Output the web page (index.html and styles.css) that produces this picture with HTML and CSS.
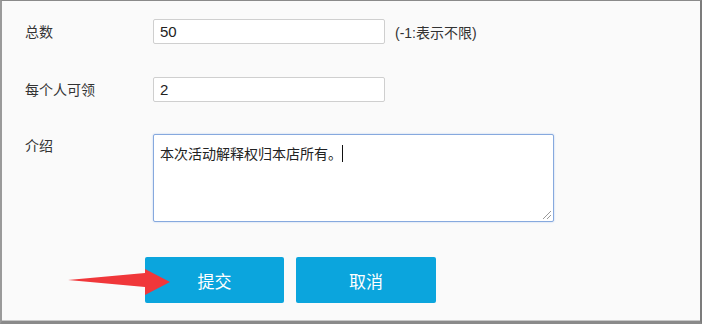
FILE: index.html
```html
<!DOCTYPE html>
<html>
  <head>
    <meta charset="utf-8">
    <title>优惠券设置</title>
    <link rel="stylesheet" href="styles.css">
  </head>
  <body>
    <div class="frame">
      <form class="form">
        <div class="row">
          <label class="label">总数</label>
          <div class="field">
            <input class="input" type="text" value="50">
            <span class="hint">(-1:表示不限)</span>
          </div>
        </div>

        <div class="row">
          <label class="label">每个人可领</label>
          <div class="field">
            <input class="input" type="text" value="2">
          </div>
        </div>

        <div class="row row_top">
          <label class="label">介绍</label>
          <div class="field">
            <div class="textarea">本次活动解释权归本店所有<span class="stop">。</span><span class="caret"></span></div>
          </div>
        </div>

        <div class="actions">
          <button class="btn" type="button">提交</button>
          <button class="btn btn_wide" type="button">取消</button>
        </div>
      </form>

      <!-- red pointer drawn over the page -->
      <svg class="arrow" width="110" height="34" viewBox="66 266 110 34">
        <polygon points="68,280 145,273 145,269 170,282 145,295 145,287" fill="#f0373a"/>
      </svg>
    </div>
  </body>
</html>
```
FILE: styles.css
```css
* {
  margin: 0;
  padding: 0;
  box-sizing: border-box;
}

body {
  background: #ffffff;
  font-family: "Liberation Sans", "Noto Sans CJK SC", sans-serif;
  color: #333;
}

.frame {
  position: relative;
  width: 702px;
  height: 324px;
  background: #fafafa;
  border-top: 1px solid #8a8a8a;
  border-left: 2px solid #9a9a9a;
  border-right: 2px solid #7c7c7c;
  border-bottom: 3px solid #8a8a8a;
  box-shadow: inset 0 -1px 0 #c8c8c8;
}

.form {
  padding: 18px 0 0 23px;
}

.row {
  display: grid;
  grid-template-columns: 128px auto;
  align-items: center;
  margin-bottom: 33px;
}

.row_top {
  align-items: start;
  margin-top: -1px;
  margin-bottom: 35px;
}

.row_top .label {
  padding-top: 2px;
}

.label {
  font-size: 14px;
  line-height: 20px;
  color: #333;
}

.field {
  display: flex;
  align-items: center;
}

.input {
  width: 232px;
  height: 25px;
  border: 1px solid #cfcfcf;
  border-radius: 2px;
  background: #fff;
  padding: 0 6px;
  font-family: "Liberation Sans", "Noto Sans CJK SC", sans-serif;
  font-size: 15px;
  color: #222;
  outline: none;
}

.hint {
  margin-left: 10px;
  font-size: 14px;
  color: #333;
}

.textarea {
  position: relative;
  width: 401px;
  height: 88px;
  border: 1px solid #86a9de;
  border-radius: 2px;
  box-shadow: 0 0 2px #b4cbee;
  background: #fff;
  padding: 9px 6px;
  font-family: "Noto Sans CJK SC", sans-serif;
  font-size: 14px;
  line-height: 18px;
  color: #222;
}

.stop {
  letter-spacing: -5px;
}

/* resize grip in the corner */
.textarea::after {
  content: "";
  position: absolute;
  right: 2px;
  bottom: 2px;
  width: 8px;
  height: 8px;
  background: linear-gradient(135deg, transparent 45%, #999 45%, #999 52%, transparent 52%, transparent 70%, #999 70%, #999 77%, transparent 77%);
}

.caret {
  display: inline-block;
  width: 1px;
  height: 17px;
  margin-left: 5px;
  background: #111;
  vertical-align: -3px;
}

.actions {
  display: flex;
  gap: 12px;
  padding-left: 120px;
}

.btn {
  width: 139px;
  height: 46px;
  border: none;
  border-radius: 2px;
  background: #0ba5dd;
  color: #fff;
  font-family: "Noto Sans CJK SC", sans-serif;
  font-size: 17px;
}

.btn_wide {
  width: 140px;
}

.arrow {
  position: absolute;
  left: 64px;
  top: 265px;
}
```
